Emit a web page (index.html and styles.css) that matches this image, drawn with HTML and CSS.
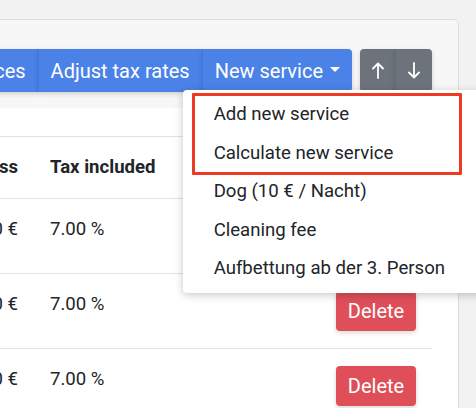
FILE: index.html
```html
<!DOCTYPE html>
<html lang="en">
<head>
<meta charset="utf-8">
<title>Services</title>
<link rel="stylesheet" href="styles.css">
</head>
<body>
<div class="page">
  <div class="card">
    <div class="card-header">
      <div class="toolbar">
        <div class="btn-group">
          <button class="btn btn-blue">Edit prices</button>
          <button class="btn btn-blue">Adjust tax rates</button>
          <div class="dropdown">
            <button class="btn btn-blue">New service <span class="caret"></span></button>
            <div class="dropdown-menu">
              <a class="dropdown-item">Add new service</a>
              <a class="dropdown-item">Calculate new service</a>
              <a class="dropdown-item">Dog (10 € / Nacht)</a>
              <a class="dropdown-item">Cleaning fee</a>
              <a class="dropdown-item">Aufbettung ab der 3. Person</a>
              <div class="highlight"></div>
            </div>
          </div>
        </div>
        <div class="btn-group">
          <button class="btn btn-gray btn-up" aria-label="Move up">
            <svg width="12" height="17" viewBox="0 0 12 17"><path d="M6 16V1.5M1 6.5L6 1.5L11 6.5" fill="none" stroke="#fff" stroke-width="1.8" stroke-linecap="round" stroke-linejoin="round"/></svg>
          </button>
          <button class="btn btn-gray btn-down" aria-label="Move down">
            <svg width="12" height="17" viewBox="0 0 12 17"><path d="M6 1V15.5M1 10.5L6 15.5L11 10.5" fill="none" stroke="#fff" stroke-width="1.8" stroke-linecap="round" stroke-linejoin="round"/></svg>
          </button>
        </div>
      </div>
    </div>
    <div class="card-body">
      <table class="table">
        <colgroup>
          <col class="c-name"><col class="c-gross"><col class="c-tax"><col>
        </colgroup>
        <thead>
          <tr><th>Name</th><th class="num">Gross</th><th>Tax included</th><th></th></tr>
        </thead>
        <tbody>
          <tr><td>Breakfast</td><td class="num">10.00 €</td><td>7.00 %</td><td class="actions"><button class="btn-delete">Delete</button></td></tr>
          <tr><td>Lunch</td><td class="num">15.00 €</td><td>7.00 %</td><td class="actions"><button class="btn-delete">Delete</button></td></tr>
          <tr><td>Dinner</td><td class="num">20.00 €</td><td>7.00 %</td><td class="actions"><button class="btn-delete">Delete</button></td></tr>
        </tbody>
      </table>
    </div>
  </div>
</div>
</body>
</html>
```
FILE: styles.css
```css
* { box-sizing: border-box; }
html, body { margin: 0; padding: 0; }
body {
  width: 476px;
  height: 408px;
  overflow: hidden;
  background: #f2f2f2;
  font-family: Roboto, "Liberation Sans", sans-serif;
  color: #212529;
}
.page {
  width: 476px;
  height: 408px;
  overflow: hidden;
  padding-top: 19px;
}
.card {
  margin: 0 17px 0 -283px;
  border: 1px solid #dcdcdc;
  border-radius: 6px;
  background: #fff;
}
.card-header {
  background: #f7f7f7;
  padding: 29px 26px 16px;
  border-radius: 6px 6px 0 0;
}
.toolbar {
  display: flex;
  justify-content: flex-end;
  gap: 8px;
}
.btn-group { display: flex; }
.btn {
  height: 43px;
  border: 0;
  margin: 0;
  font-family: inherit;
  font-size: 20px;
  color: #fff;
  padding: 0 12px;
  display: flex;
  align-items: center;
  white-space: nowrap;
  box-shadow: 0 2px 5px rgba(0,0,0,0.16);
}
.btn-blue {
  background: #4b82e8;
  border-left: 1px solid rgba(0,0,0,0.07);
}
.btn-group > .btn-blue:first-child { border-left: 0; }
.dropdown { position: relative; }
.dropdown:last-child .btn { border-radius: 0 4px 4px 0; }
.caret {
  display: inline-block;
  margin-left: 7px;
  width: 0; height: 0;
  border-left: 5px solid transparent;
  border-right: 5px solid transparent;
  border-top: 5px solid #fff;
  position: relative;
  top: -1px;
}
.btn-gray {
  background: #6c737b;
  justify-content: center;
  padding: 0;
}
.btn-up { width: 35px; border-radius: 4px 0 0 4px; }
.btn-down { width: 37px; border-radius: 0 4px 4px 0; border-left: 1px solid rgba(0,0,0,0.08); }
.dropdown-menu {
  position: absolute;
  top: 41px;
  left: -19px;
  width: 320px;
  background: #fff;
  border-radius: 4px;
  padding: 5px 0;
  box-shadow: 0 2px 8px rgba(0,0,0,0.22);
  z-index: 10;
}
.dropdown-item {
  display: block;
  padding: 0 31px;
  height: 38.5px;
  line-height: 38.5px;
  font-size: 18.6px;
  color: #212529;
  white-space: nowrap;
}
.highlight {
  position: absolute;
  left: 9px;
  top: 3px;
  width: 270px;
  height: 82px;
  border: 3px solid #ee3a22;
  border-radius: 1px;
}
.card-body {
  padding: 28px 26px 0;
}
.table {
  width: 100%;
  table-layout: fixed;
  border-collapse: collapse;
  font-size: 18.6px;
  line-height: 27px;
}
.c-name { width: 150px; }
.c-gross { width: 140px; }
.c-tax { width: 150px; }
.table th, .table td {
  padding: 17px 16px;
  text-align: left;
  vertical-align: top;
  border-top: 1px solid #dee2e6;
  white-space: nowrap;
}
.table th { font-weight: 700; border-bottom: 1px solid #dee2e6; }
.table .num { text-align: right; }
.table .actions { text-align: right; }
.btn-delete {
  height: 40px;
  width: 80px;
  padding: 0;
  border: 0;
  border-radius: 4px;
  background: #de4f5a;
  color: #fff;
  font-family: inherit;
  font-size: 20px;
  box-shadow: 0 2px 5px rgba(0,0,0,0.16);
}
```
